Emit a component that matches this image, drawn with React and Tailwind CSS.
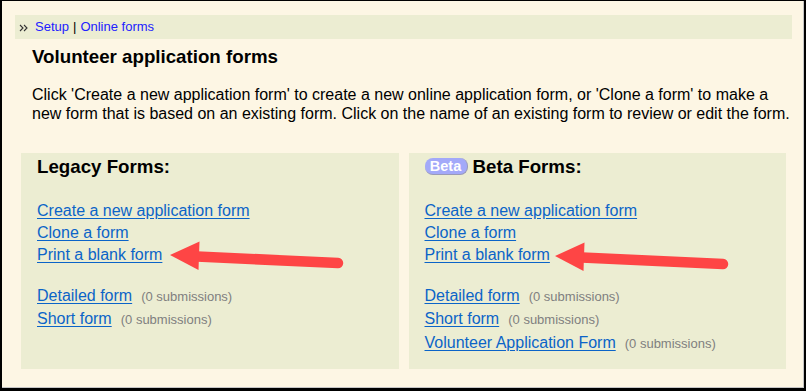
import React from "react";

const FONT = { fontFamily: '"Liberation Sans", Arial, sans-serif' };

function Arrow({ className = "" }) {
  return (
    <svg
      className={`pointer-events-none absolute left-0 top-0 ${className}`}
      width="360"
      height="160"
      viewBox="0 0 360 160"
    >
      <line x1="176" y1="103.5" x2="317" y2="110" stroke="#fe4545" strokeWidth="10.5" strokeLinecap="round" />
      <polygon points="149,102 178.5,88.5 177.5,117" fill="#fe4545" />
    </svg>
  );
}

function FormLink({ children, count }) {
  return (
    <div>
      <a href="#" className="text-[16px] text-[#0b64c8] underline underline-offset-[2px]">
        {children}
      </a>
      {count !== undefined && (
        <span className="ml-[9px] text-[13px] text-[#7f7f7f]">({count} submissions)</span>
      )}
    </div>
  );
}

function Panel({ title, badge, links, forms, arrowClass }) {
  return (
    <div className="relative bg-[#ecedd2] pl-4 pt-[3px]">
      <h3 className="flex items-center text-[18.72px] font-bold leading-[22px] text-black">
        {badge && (
          <span className="mr-[5px] inline-flex h-[17px] w-[43px] items-center justify-center rounded-[8px] border-b border-r border-[#9a9ab8] bg-[#a3a9f9] text-[14.5px] font-bold leading-none text-white">
            {badge}
          </span>
        )}
        {title}
      </h3>
      <div className="mt-[22px] leading-[22.4px]">
        {links.map((l) => (
          <FormLink key={l}>{l}</FormLink>
        ))}
      </div>
      <div className="mt-[18px] leading-[22.4px]">
        {forms.map((f) => (
          <FormLink key={f} count={0}>
            {f}
          </FormLink>
        ))}
      </div>
      <Arrow className={arrowClass} />
    </div>
  );
}

export default function App() {
  const actions = ["Create a new application form", "Clone a form", "Print a blank form"];
  return (
    <div style={FONT} className="h-[391px] w-[806px] border-b-[3px] border-l-2 border-r-2 border-t border-black bg-white">
      <div className="h-full border-b border-r border-[#c4c4c4] bg-[#fdf6e4] pt-[14px]">
        <div className="ml-[13px] mr-[11px] flex h-[24px] items-center bg-[#ecedd2] pl-[4px] text-[13px]">
          <svg width="10" height="8" viewBox="0 0 10 8" className="mr-[6px] mt-[1px]">
            <path d="M1 1 L4 4 L1 7 M5 1 L8 4 L5 7" fill="none" stroke="#333" strokeWidth="1.1" />
          </svg>
          <a href="#" className="text-[#2121ff]">Setup</a>
          <span className="mx-[4px] text-black">|</span>
          <a href="#" className="text-[#2121ff]">Online forms</a>
        </div>

        <div className="pl-[30px] pr-[9px]">
          <h2 className="mt-[7px] text-[18.72px] font-bold leading-[21.5px] text-black">
            Volunteer application forms
          </h2>
          <p className="mt-[17px] text-[16px] leading-[19px] text-black">
            Click 'Create a new application form' to create a new online application form, or 'Clone a form' to make a
            new form that is based on an existing form. Click on the name of an existing form to review or edit the form.
          </p>
        </div>

        <div className="ml-[19px] mr-[17px] mt-[30px] grid h-[216px] grid-cols-2 gap-[10px]">
          <Panel title="Legacy Forms:" links={actions} forms={["Detailed form", "Short form"]} />
          <Panel
            title="Beta Forms:"
            badge="Beta"
            links={actions}
            forms={["Detailed form", "Short form", "Volunteer Application Form"]}
            arrowClass="-translate-x-[3px] translate-y-[1px]"
          />
        </div>
      </div>
    </div>
  );
}
